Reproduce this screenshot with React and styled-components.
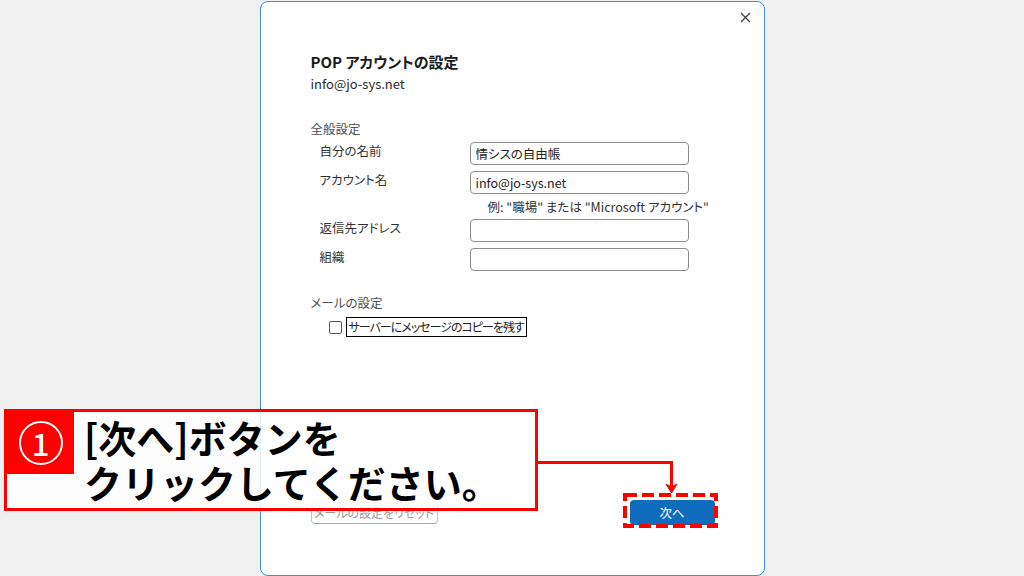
import React from 'react';
import styled, { createGlobalStyle } from 'styled-components';

const Global = createGlobalStyle`
  html, body { margin: 0; padding: 0; background: #f0f0f0; }
  body {
    font-family: "Noto Sans CJK JP", "Noto Sans", sans-serif;
    font-feature-settings: "palt";
    color: #222;
  }
  * { box-sizing: border-box; }
`;

const Page = styled.div`
  position: relative;
  width: 1024px;
  height: 576px;
  overflow: hidden;
  display: flex;
  justify-content: center;
  padding-top: 1px;
`;

const Dialog = styled.div`
  width: 505px;
  height: 575px;
  background: #fff;
  border: 1.5px solid #3b8ee4;
  border-radius: 8px;
  display: flex;
  flex-direction: column;
`;

const Header = styled.div`
  display: flex;
  justify-content: flex-end;
  height: 26px;
  padding: 4px 7px 0 0;
`;

const CloseButton = styled.button`
  width: 22px;
  height: 22px;
  border: none;
  background: none;
  padding: 0;
  display: flex;
  align-items: center;
  justify-content: center;
  color: #444;
`;

const Body = styled.div`
  padding-left: 50px;
  display: flex;
  flex-direction: column;
`;

const Title = styled.h1`
  margin: 24px 0 0;
  font-size: 15px;
  line-height: 20px;
  font-weight: 700;
  color: #1b1b1b;
`;

const Subtitle = styled.div`
  margin-top: 3px;
  font-size: 13px;
  line-height: 18px;
  color: #2b2b2b;
`;

const Section = styled.div`
  margin-top: ${p => p.$top}px;
  font-size: 12.5px;
  line-height: 18px;
  color: #505050;
`;

const FormGrid = styled.div`
  margin-top: 4px;
  padding-left: 9px;
  display: grid;
  grid-template-columns: 150px 219px;
  row-gap: 6px;
`;

const Label = styled.div`
  font-size: 12.5px;
  line-height: 18px;
  color: #333;
`;

const Input = styled.input`
  height: 23px;
  width: 219px;
  border: 1px solid #8c8c8c;
  border-radius: 4px;
  padding: 0 5px;
  font-family: inherit;
  font-feature-settings: "palt";
  font-size: 12.5px;
  color: #222;
  background: #fff;
  outline: none;
`;

const Hint = styled.div`
  grid-column: 2;
  padding-left: 18px;
  white-space: nowrap;
  font-size: 12.5px;
  line-height: 13px;
  color: #333;
`;

const CheckRow = styled.div`
  margin-top: 5px;
  margin-left: 18px;
  display: flex;
  align-items: center;
  gap: 4px;
`;

const CheckBox = styled.span`
  width: 13px;
  height: 13px;
  border: 1px solid #5a5a5a;
  border-radius: 2px;
  background: #fff;
`;

const FocusLabel = styled.span`
  height: 20px;
  border: 1.5px solid #000;
  padding: 0 2px;
  font-size: 12px;
  letter-spacing: -1px;
  line-height: 17px;
  color: #222;
  white-space: nowrap;
`;

const Footer = styled.div`
  margin-top: auto;
  padding: 0 49px 50px 50px;
  display: flex;
  justify-content: space-between;
  align-items: center;
`;

const ResetButton = styled.button`
  width: 127px;
  height: 22px;
  border: 1px solid #c4c4c4;
  border-bottom-color: #a8a8a8;
  border-radius: 4px;
  background: #fff;
  font-family: inherit;
  font-feature-settings: "palt";
  font-size: 12px;
  color: #9a9a9a;
  padding: 0;
`;

const PrimaryButton = styled.button`
  width: 85px;
  height: 25px;
  border: none;
  border-radius: 4px;
  background: #0f6cbd;
  font-family: inherit;
  font-feature-settings: "palt";
  font-size: 12.5px;
  color: #fff;
  padding: 0;
`;

/* ---------- annotation overlay ---------- */

const Callout = styled.div`
  position: absolute;
  left: 4px;
  top: 409px;
  width: 534px;
  height: 102px;
  border: 3px solid #ff0000;
  background: rgba(255, 255, 255, 0.86);
  display: flex;
  align-items: flex-start;
`;

const Badge = styled.div`
  width: 67px;
  height: 62px;
  background: #ff0000;
  display: flex;
  align-items: center;
  justify-content: center;
  flex-shrink: 0;
`;

const Circle = styled.span`
  width: 44px;
  height: 44px;
  border: 2px solid #fff;
  border-radius: 50%;
  display: flex;
  align-items: center;
  justify-content: center;
  color: #fff;
  font-size: 31px;
  font-weight: 500;
  line-height: 1;
  padding-bottom: 2px;
`;

const CalloutText = styled.div`
  padding: 2px 0 0 10px;
  font-size: 38px;
  line-height: 45px;
  font-weight: 700;
  color: #000;
  font-feature-settings: normal;
  white-space: nowrap;
`;

const Overlay = styled.svg`
  position: absolute;
  left: 0;
  top: 0;
  pointer-events: none;
`;

function CloseIcon() {
  return (
    <svg width="11" height="11" viewBox="0 0 11 11">
      <path d="M1 1 L10 10 M10 1 L1 10" stroke="#444" strokeWidth="1.3" fill="none" />
    </svg>
  );
}

export default function App() {
  return (
    <>
      <Global />
      <Page>
        <Dialog>
          <Header>
            <CloseButton aria-label="閉じる"><CloseIcon /></CloseButton>
          </Header>
          <Body>
            <Title>POP アカウントの設定</Title>
            <Subtitle>info@jo-sys.net</Subtitle>
            <Section $top={27}>全般設定</Section>
            <FormGrid>
              <Label>自分の名前</Label>
              <Input defaultValue="情シスの自由帳" />
              <Label>アカウント名</Label>
              <Input defaultValue="info@jo-sys.net" />
              <Hint>例: "職場" または "Microsoft アカウント"</Hint>
              <Label>返信先アドレス</Label>
              <Input defaultValue="" />
              <Label>組織</Label>
              <Input defaultValue="" />
            </FormGrid>
            <Section $top={23}>メールの設定</Section>
            <CheckRow>
              <CheckBox />
              <FocusLabel>サーバーにメッセージのコピーを残す</FocusLabel>
            </CheckRow>
          </Body>
          <Footer>
            <ResetButton>メールの設定をリセット</ResetButton>
            <PrimaryButton>次へ</PrimaryButton>
          </Footer>
        </Dialog>

        <Callout>
          <Badge><Circle>1</Circle></Badge>
          <CalloutText>
            [次へ]ボタンを<br />クリックしてください。
          </CalloutText>
        </Callout>

        <Overlay width="1024" height="576" viewBox="0 0 1024 576">
          <path d="M537 462.5 H671.5 V488" stroke="#ff0000" strokeWidth="3" fill="none" />
          <path d="M666 484 L671.5 493 L677 484 L671.5 487 Z" fill="#ff0000" stroke="#ff0000" strokeWidth="1" />
          <rect x="625" y="495" width="91" height="31" fill="none" stroke="#ff0000" strokeWidth="4" strokeDasharray="12 5" />
        </Overlay>
      </Page>
    </>
  );
}
